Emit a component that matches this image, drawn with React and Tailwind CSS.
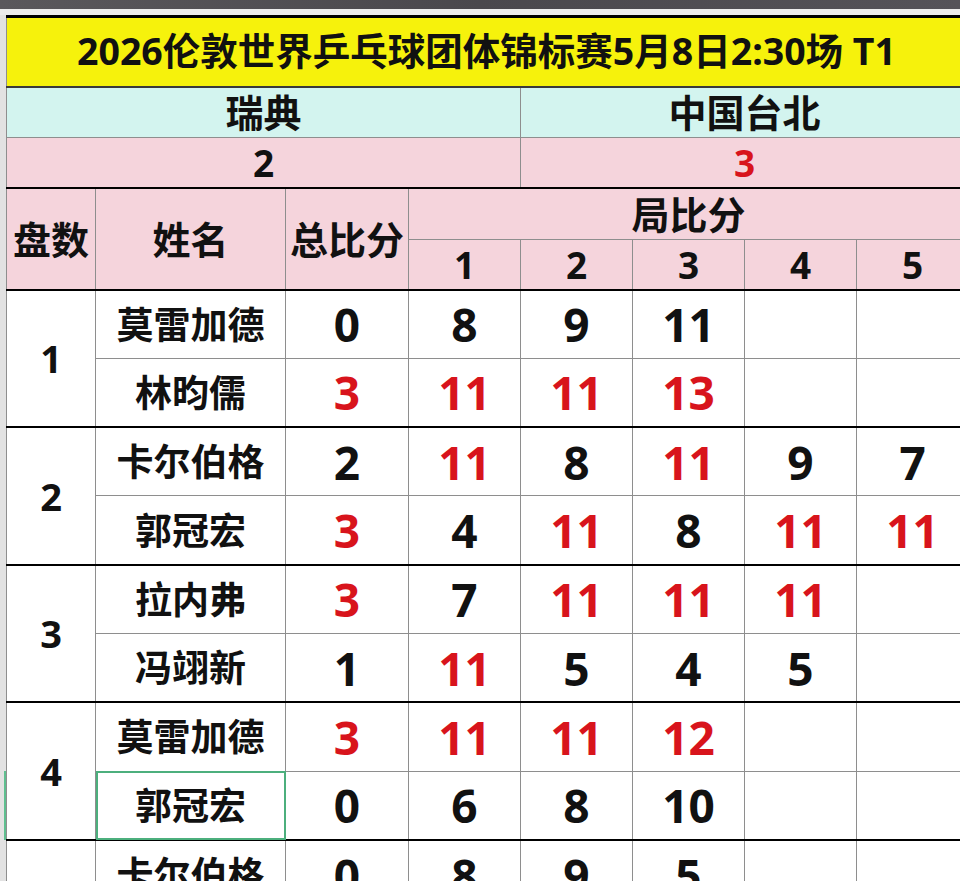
import React from "react";

const matches = [
  {
    no: 1,
    players: [
      { name: "莫雷加德", total: 0, games: [8, 9, 11] },
      { name: "林昀儒", total: 3, games: [11, 11, 13] },
    ],
  },
  {
    no: 2,
    players: [
      { name: "卡尔伯格", total: 2, games: [11, 8, 11, 9, 7] },
      { name: "郭冠宏", total: 3, games: [4, 11, 8, 11, 11] },
    ],
  },
  {
    no: 3,
    players: [
      { name: "拉内弗", total: 3, games: [7, 11, 11, 11] },
      { name: "冯翊新", total: 1, games: [11, 5, 4, 5] },
    ],
  },
  {
    no: 4,
    players: [
      { name: "莫雷加德", total: 3, games: [11, 11, 12] },
      { name: "郭冠宏", total: 0, games: [6, 8, 10], selected: true },
    ],
  },
  {
    no: 5,
    players: [
      { name: "卡尔伯格", total: 0, games: [8, 9, 5] },
      { name: "林昀儒", total: 3, games: [11, 11, 11] },
    ],
  },
];

const thin = "border border-[#8e8e8e]";

const MatchRows = ({ match }) => {
  const [a, b] = match.players;
  return match.players.map((p, i) => {
    const other = i === 0 ? b : a;
    const last = i === 1;
    const rowBorder = last ? "border-b-2 border-b-black" : "";
    return (
      <tr key={i}>
        {i === 0 && (
          <td rowSpan={2} className={`${thin} border-b-2 border-b-black text-center text-[38px] bg-white`}>
            {match.no}
          </td>
        )}
        <td
          className={`${thin} ${rowBorder} h-[68.8px] text-center text-[37px] bg-white ${
            p.selected ? "outline-2 -outline-offset-2 outline-[#4caf7d]" : ""
          }`}
        >
          {p.name}
        </td>
        <td
          className={`${thin} ${rowBorder} text-center text-[46px] bg-white ${
            p.total > other.total ? "text-[#d8141c]" : ""
          }`}
        >
          {p.total}
        </td>
        {[0, 1, 2, 3, 4].map((g) => {
          const v = p.games[g];
          const ov = other.games[g];
          const win = v !== undefined && v > ov;
          return (
            <td
              key={g}
              className={`${thin} ${rowBorder} text-center text-[46px] bg-white ${win ? "text-[#d8141c]" : ""}`}
            >
              {v ?? ""}
            </td>
          );
        })}
      </tr>
    );
  });
};

export default function App() {
  return (
    <div className="w-[960px] h-[881px] overflow-hidden bg-[#e8e8e8] font-['Noto_Sans','Noto_Sans_CJK_SC',sans-serif] font-bold text-[#111]">
      <div className="h-[9px] bg-gradient-to-r from-[#5a585c] via-[#4a484d] to-[#555359]" />
      <div className="h-[6px] bg-[#ececec]" />
      <div className="flex">
        <div className="w-[6px] shrink-0 bg-[#e2e2e2]">
          <div className="mt-[756px] h-[69px] border-r-2 border-[#5fbf8f]" />
        </div>
        <table className="table-fixed border-collapse w-[962px] shrink-0 leading-none">
          <colgroup>
            <col className="w-[89px]" />
            <col className="w-[190px]" />
            <col className="w-[123px]" />
            <col className="w-[112px]" />
            <col className="w-[112px]" />
            <col className="w-[112px]" />
            <col className="w-[112px]" />
            <col className="w-[112px]" />
          </colgroup>
          <tbody>
            <tr>
              <td
                colSpan={8}
                className="h-[70px] border-t-[3px] border-t-black border-b-2 border-b-[#3a3a3a] border-x border-x-[#8e8e8e] bg-[#f6f20c] text-[37.5px] pl-[70px] pb-[3px] text-left"
              >
                2026伦敦世界乒乓球团体锦标赛5月8日2:30场 T1
              </td>
            </tr>
            <tr>
              <td colSpan={4} className={`${thin} h-[51px] bg-[#d3f4ef] text-center text-[38px]`}>
                瑞典
              </td>
              <td colSpan={4} className={`${thin} bg-[#d3f4ef] text-center text-[38px]`}>
                中国台北
              </td>
            </tr>
            <tr>
              <td colSpan={4} className={`${thin} border-b-2 border-b-black h-[50px] bg-[#f5d4dc] text-center text-[37px]`}>
                2
              </td>
              <td
                colSpan={4}
                className={`${thin} border-b-2 border-b-black bg-[#f5d4dc] text-center text-[37px] text-[#d8141c]`}
              >
                3
              </td>
            </tr>
            <tr>
              <td rowSpan={2} className={`${thin} border-b-2 border-b-black bg-[#f5d4dc] text-center text-[38px]`}>
                盘数
              </td>
              <td rowSpan={2} className={`${thin} border-b-2 border-b-black bg-[#f5d4dc] text-center text-[38px]`}>
                姓名
              </td>
              <td rowSpan={2} className={`${thin} border-b-2 border-b-black bg-[#f5d4dc] text-center text-[38px]`}>
                总比分
              </td>
              <td colSpan={5} className={`${thin} h-[52px] bg-[#f5d4dc] text-center text-[38px]`}>
                局比分
              </td>
            </tr>
            <tr>
              {[1, 2, 3, 4, 5].map((n) => (
                <td
                  key={n}
                  className={`${thin} border-b-2 border-b-black h-[50px] bg-[#f5d4dc] text-center text-[37px]`}
                >
                  {n}
                </td>
              ))}
            </tr>
            {matches.map((m) => (
              <MatchRows key={m.no} match={m} />
            ))}
          </tbody>
        </table>
      </div>
    </div>
  );
}
